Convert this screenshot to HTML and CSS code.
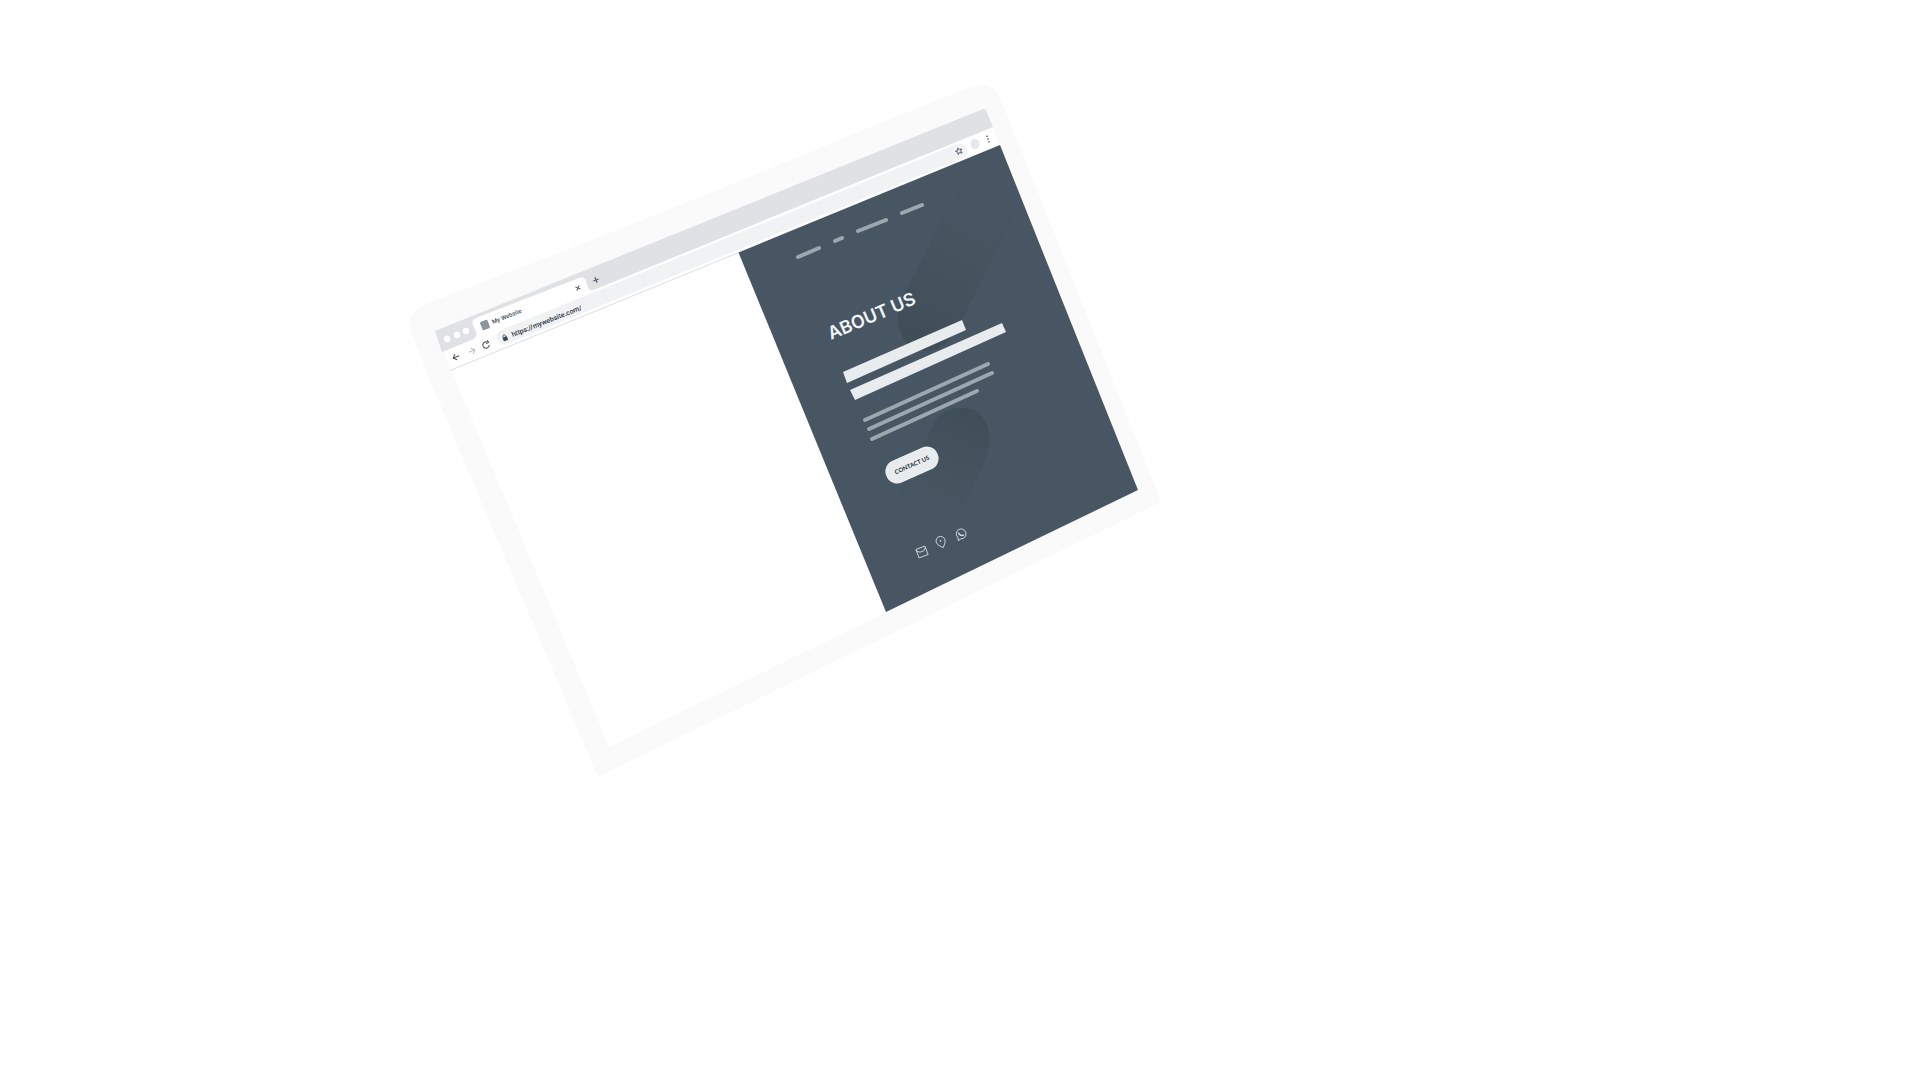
FILE: index.html
```html
<!DOCTYPE html>
<html lang="en">
<head>
<meta charset="utf-8">
<meta name="viewport" content="width=device-width, initial-scale=1">
<title>My Website</title>
<link rel="stylesheet" href="styles.css">
</head>
<body>
<main class="stage">
<svg class="mockup" viewBox="0 0 1920 1080" role="group" aria-label="Website in a tilted browser window">
  <defs>
    <linearGradient id="shade-top" gradientUnits="userSpaceOnUse" x1="922" y1="335" x2="1008" y2="150">
      <stop offset="0" stop-color="#404e58"/>
      <stop offset="1" stop-color="#485663" stop-opacity="0"/>
    </linearGradient>
    <linearGradient id="shade-bottom" gradientUnits="userSpaceOnUse" x1="970" y1="415" x2="908" y2="552">
      <stop offset="0" stop-color="#404e58"/>
      <stop offset="1" stop-color="#485663" stop-opacity="0"/>
    </linearGradient>
  </defs>

  <!-- Device frame and screen -->
  <path class="frame" d="M426 304 L597 238 L720 189 L880 123 L970 87 Q992 79 1001 100 L1161 502 L598 777 L434 390 L411 332 Q405 313 426 304Z"/>
  <path class="paper" d="M435 331 L985 108 L1138 490 L609 747Z"/>

  <!-- Tab strip -->
  <path class="strip" d="M435 331 L983 109 Q985 108 986 110 L993 127 L442 352Z"/>
  <path class="paper" d="M470 342 Q478 337 476 332 L473 325 Q471 320 476 318 L579 278 Q584 276 586 281 L588 287 Q590 292 595 290Z"/>
  <g class="paper">
    <circle cx="447" cy="339" r="3.2"/><circle cx="457" cy="335" r="3.2"/><circle cx="466" cy="331" r="3.2"/>
  </g>
  <rect class="favicon" x="-4" y="-4.5" width="8" height="9" rx="1.5" transform="translate(485 325) rotate(-22)"/>
  <text class="tab-title" transform="translate(493 324) rotate(-22)">My Website</text>
  <g class="glyph" transform="translate(578 288) rotate(-22)"><path d="M-2-2 2 2M-2 2 2-2"/></g>
  <g class="glyph" transform="translate(596 280) rotate(-22)"><path d="M-3 0H3M0-3V3"/></g>

  <!-- Toolbar -->
  <path class="rule" d="M450 370.500 L739 252.500"/>
  <path class="address" d="M504 337 L960 151"/>
  <g class="glyph" transform="translate(456 357) rotate(-22)"><path d="M3.500 0H-3M0-3-3 0 0 3"/></g>
  <g class="glyph muted" transform="translate(472 351) rotate(-22)"><path d="M-3.500 0H3M0-3 3 0 0 3"/></g>
  <g class="glyph" transform="translate(486 345) rotate(-22)"><path d="M3 1.200A3.200 3.200 0 1 1 2.400-2.200M3.200-4V-1.300H.5"/></g>
  <g transform="translate(505 338) rotate(-22)">
    <rect class="ink" x="-2.300" y="-1.200" width="4.600" height="4" rx=".5"/>
    <path class="glyph thin" d="M-1.300-1V-2A1.300 1.300 0 0 1 1.300-2V-1"/>
  </g>
  <foreignObject x="0" y="-8" width="90" height="10" transform="translate(513 338) rotate(-21.500)">
    <input class="url" type="text" aria-label="Address" value="https://mywebsite.com/" readonly>
  </foreignObject>
  <path class="glyph thin" transform="translate(959 151) rotate(-22)" d="M0-3.300 1-1 3.300-.9 1.500.6 2.100 3 0 1.700-2.100 3-1.500.6-3.300-.9-1-1Z"/>
  <ellipse class="avatar" cx="975" cy="144" rx="4.500" ry="5.200" transform="rotate(-15 975 144)"/>
  <g class="ink"><circle cx="987" cy="136.300" r=".8"/><circle cx="988" cy="139" r=".8"/><circle cx="989" cy="141.700" r=".8"/></g>

  <!-- About panel -->
  <path class="panel" d="M738.500 252.500 L1000 145 L1138 490 L886 612Z"/>
  <path fill="url(#shade-top)" d="M970 168 L906 290 C892 312 897 341 915 349 C936 358 953 340 963 318 L1018 206 L1000 148Z"/>
  <path fill="url(#shade-bottom)" d="M934 423 C940 410 957 405 972 409 C989 416 994 438 985 461 L943 548 L890 560 L875 545 Z"/>
  <g class="bars nav">
    <path d="M798 257 819 248M835 241 842 238M858 231 886 220M902 213 922 205"/>
  </g>
  <text class="title" transform="translate(831 340) rotate(-23)">ABOUT US</text>
  <path class="light" d="M843 372 L962 320 L966 330 L847 383Z"/>
  <path class="light" d="M850 390 L1002 323 L1006 332 L855 400Z"/>
  <g class="bars">
    <path d="M865 420 988 364M869 429 992 373M872 439 977 391"/>
  </g>
  <foreignObject x="-28" y="-12" width="56" height="24" transform="translate(912 465) rotate(-24)">
    <button class="contact" type="button">CONTACT US</button>
  </foreignObject>

  <!-- Contact links -->
  <a href="#mail" aria-label="Email">
    <g class="social" transform="translate(922 552) rotate(-21)">
      <rect x="-4.800" y="-4.500" width="9.600" height="9"/><path d="M-4.800-3-2-.5H2L4.800-3"/>
    </g>
  </a>
  <a href="#map" aria-label="Location">
    <g class="social" transform="translate(941 542) rotate(-22)">
      <path d="M0 6C-2 3.500-4.500 2-4.500-1A4.500 4.700 0 0 1 4.500-1C4.500 2 2 3.500 0 6Z"/><circle cx="0" cy="-1.200" r=".6"/>
    </g>
  </a>
  <a href="#chat" aria-label="WhatsApp">
    <g class="social" transform="translate(961 534) rotate(-22)">
      <path d="M-5 5.200-4.100 2.200A4.800 5 0 1 1-2 4.400Z"/><path class="phone" d="M-1.800-2.200C-2.300 0 0 2.300 2.200 1.900"/>
    </g>
  </a>
</svg>
</main>
</body>
</html>
```
FILE: styles.css
```css
body {
  margin: 0;
  background: #fff;
  font-family: Roboto, "Liberation Sans", sans-serif;
}

.stage {
  width: 100%;
}

.mockup {
  display: block;
  width: 100%;
  height: auto;
}

.frame { fill: #fafafa; }
.paper { fill: #fff; }
.strip { fill: #dfe1e5; }
.favicon { fill: #8b969e; }
.avatar { fill: #e6e9ec; }
.ink { fill: #3c4a56; }
.panel { fill: #485663; }
.light { fill: #e8ecef; }

.rule {
  stroke: #dcdee1;
  stroke-width: 1;
}

.address {
  stroke: #f0f2f4;
  stroke-width: 15;
  stroke-linecap: round;
}

.glyph {
  fill: none;
  stroke: #3c4a56;
  stroke-width: 1;
}

.thin { stroke-width: .8; }
.muted { stroke: #b5bbc0; }

.tab-title {
  fill: #3c4a56;
  font-size: 6px;
  font-weight: 500;
}

.url {
  display: block;
  width: 100%;
  height: 10px;
  margin: 0;
  padding: 0;
  border: 0;
  outline: 0;
  background: transparent;
  color: #1f2d39;
  font-family: inherit;
  font-size: 7px;
  font-weight: 500;
  line-height: 10px;
}

.bars {
  fill: none;
  stroke: #9ca8b0;
  stroke-width: 4;
  stroke-linecap: round;
}

.title {
  fill: #f1f4f6;
  font-family: Inter, "Open Sans", sans-serif;
  font-size: 18px;
  font-weight: 600;
}

.contact {
  display: block;
  width: 56px;
  height: 24px;
  margin: 0;
  padding: 0;
  border: 0;
  border-radius: 12px;
  background: #e8ecef;
  color: #1f2d39;
  font-family: Lato, "Open Sans", sans-serif;
  font-size: 6px;
  font-weight: 700;
  line-height: 24px;
  text-align: center;
}

.social {
  fill: none;
  stroke: #dfe4e8;
  stroke-width: .8;
}

.social .phone { stroke-width: 1.4; }
```
